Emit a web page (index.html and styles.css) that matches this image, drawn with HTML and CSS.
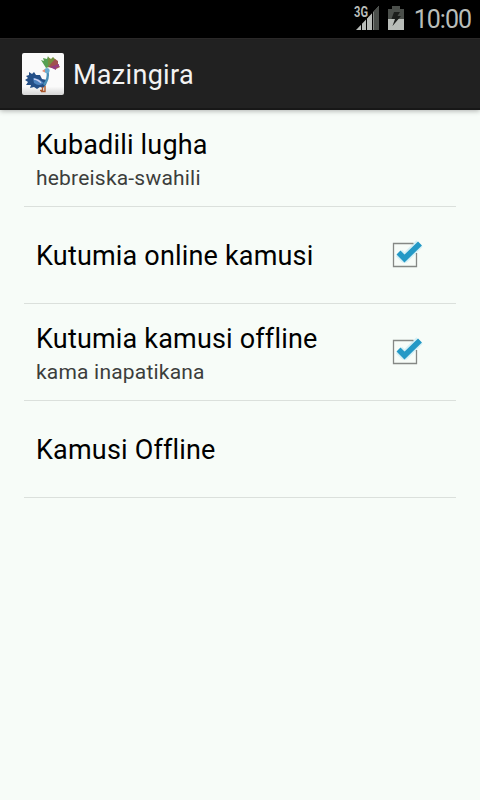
FILE: index.html
```
<!DOCTYPE html>
<html lang="sw">
<head>
  <meta charset="UTF-8">
  <meta name="viewport" content="width=device-width, initial-scale=1.0">
  <title>Mazingira</title>
  <link rel="stylesheet" href="styles.css">
</head>
<body>
  <div class="status-bar">
    <svg class="signal" width="26" height="26" viewBox="0 0 26 26">
      <path d="M2 24 L25 0 V24 Z" fill="#b9bdb9"/>
      <path d="M19.5 5.7 L25 0 V24 H19.5 Z" fill="#4b4f4b"/>
      <path d="M0 0 H14 V12 H0 Z" fill="#000"/>
      <path d="M7.5 12 V24 M12.5 10 V24 M18.5 5 V24" stroke="#000" stroke-width="1"/>
      <text class="network" x="0" y="11" textLength="14" lengthAdjust="spacingAndGlyphs">3G</text>
    </svg>
    <svg class="battery" width="16" height="24" viewBox="0 0 16 24">
      <path d="M4 0 H12 V3 H16 V24 H0 V3 H4 Z" fill="#4b4f4b"/>
      <path d="M0 13 H16 V24 H0 Z" fill="#b9bdb9"/>
      <path d="M6 6 H12 L9.5 10 H13 L4.5 20 L7 13 H3.5 Z" fill="#1c1e1c"/>
    </svg>
    <span class="clock">10:00</span>
  </div>

  <header class="action-bar">
    <div class="app-icon">
      <svg width="42" height="42" viewBox="0 0 42 42">
        <path d="M24 15 L19 7 L22 8 L21 5 L25 6 L26 3 L28 8 L27 14 Z" fill="#56a052"/>
        <path d="M26 13 L26 4 L29 6 L31 4 L34 7 L31 12 Z" fill="#75913f"/>
        <path d="M26 14 L33 6 L36 8 L36 11 L38 14 L34 16 Z" fill="#a1514f"/>
        <path d="M28 14 L37 11 L37 14 L34 14 L34 17 Z" fill="#963c82"/>
        <path d="M4 23 L7 22 L7 19 L10 21 L12 19 L14 22 L18 22 L20 26 L25 27 L24 32 L21 35 L18 34 L15 36 L12 34 L8 35 L9 32 L4 32 L6 29 L3 27 L6 25 Z" fill="#244f87"/>
        <path d="M11 25 Q16 25 22 30 Q17 34 12 30 Z" fill="#4c82be"/>
        <path d="M12 26 Q17 27 19 30" fill="none" stroke="#c8cdf0" stroke-width="1.3"/>
        <path d="M25.5 18 Q27 26 22 32" fill="none" stroke="#4b91b8" stroke-width="2.4"/>
        <circle cx="25" cy="17.5" r="2.6" fill="#69acd0"/>
        <path d="M23 16 L20 18 L23 19.5 Z" fill="#e38d74"/>
        <path d="M20.5 34 V37.5 H18 M23 33 V38.5 H19" fill="none" stroke="#a9572c" stroke-width="1.4"/>
      </svg>
    </div>
    <h1>Mazingira</h1>
  </header>

  <main class="settings">
    <div class="row">
      <div class="label">
        <p class="title">Kubadili lugha</p>
        <p class="summary">hebreiska-swahili</p>
      </div>
    </div>
    <div class="row">
      <div class="label">
        <p class="title">Kutumia online kamusi</p>
      </div>
      <svg class="checkbox" width="36" height="36" viewBox="0 0 36 36">
        <path class="box" d="M24.5 8.5 H4.5 V31.5 H27.5 V18"/>
        <path class="glow" d="M10 18 L15.5 23.5 L30.5 8.5"/>
        <path class="tick" d="M9.5 17.5 L15.5 23.5 L31 8.5"/>
      </svg>
    </div>
    <div class="row">
      <div class="label">
        <p class="title">Kutumia kamusi offline</p>
        <p class="summary">kama inapatikana</p>
      </div>
      <svg class="checkbox" width="36" height="36" viewBox="0 0 36 36">
        <path class="box" d="M24.5 8.5 H4.5 V31.5 H27.5 V18"/>
        <path class="glow" d="M10 18 L15.5 23.5 L30.5 8.5"/>
        <path class="tick" d="M9.5 17.5 L15.5 23.5 L31 8.5"/>
      </svg>
    </div>
    <div class="row">
      <div class="label">
        <p class="title">Kamusi Offline</p>
      </div>
    </div>
  </main>
</body>
</html>
```
FILE: styles.css
```
:root {
  --background: #f7fcf8;
  --bar: #212121;
  --divider: #dbe0dc;
  --status: #b9bdb9;
}

* {
  margin: 0;
  padding: 0;
  box-sizing: border-box;
}

body {
  font-family: Roboto, sans-serif;
  background-color: var(--background);
  color: #000;
  min-height: 100vh;
}

.status-bar {
  display: flex;
  align-items: flex-start;
  justify-content: flex-end;
  height: 38px;
  padding: 6px 9px 0 0;
  background-color: #000;
}

.signal {
  margin-right: 8px;
  overflow: visible;
}

.network {
  font-size: 15px;
  font-weight: 700;
  fill: var(--status);
}

.battery {
  margin-right: 10px;
}

.clock {
  font-size: 25px;
  line-height: 28px;
  letter-spacing: -1px;
  color: var(--status);
}

.action-bar {
  display: flex;
  align-items: center;
  height: 72px;
  padding-left: 22px;
  background-color: var(--bar);
  border-top: 1px solid #2a2828;
  border-bottom: 2px solid #171717;
  box-shadow: 0 1px 5px rgba(0, 0, 0, 0.3);
}

.app-icon {
  width: 42px;
  height: 42px;
  border-radius: 2px;
  background: linear-gradient(#fafafa 80%, #d5d5d5);
}

h1 {
  margin-left: 9px;
  padding-top: 2px;
  font-size: 27px;
  font-weight: 400;
  line-height: 32px;
  letter-spacing: 0.3px;
  color: #f3f3f3;
}

.settings {
  padding: 0 24px;
}

.row {
  display: flex;
  align-items: center;
  justify-content: space-between;
  height: 97px;
  padding: 0 31px 0 12px;
  border-bottom: 1px solid var(--divider);
}

.label {
  padding-top: 2px;
}

.title {
  font-size: 27px;
  line-height: 36px;
  letter-spacing: 0.18px;
}

.summary {
  padding-top: 1px;
  margin-bottom: -1px;
  font-size: 21px;
  line-height: 29px;
  letter-spacing: 0.2px;
  color: #3c3e3c;
}

.checkbox {
  margin-bottom: 4px;
}

.box {
  fill: none;
  stroke: #858885;
  stroke-width: 1.3;
}

.glow {
  fill: none;
  stroke: #33b5e5;
  stroke-width: 9;
  stroke-linejoin: round;
  opacity: 0.16;
}

.tick {
  fill: none;
  stroke: #2499c6;
  stroke-width: 5.6;
}
```
